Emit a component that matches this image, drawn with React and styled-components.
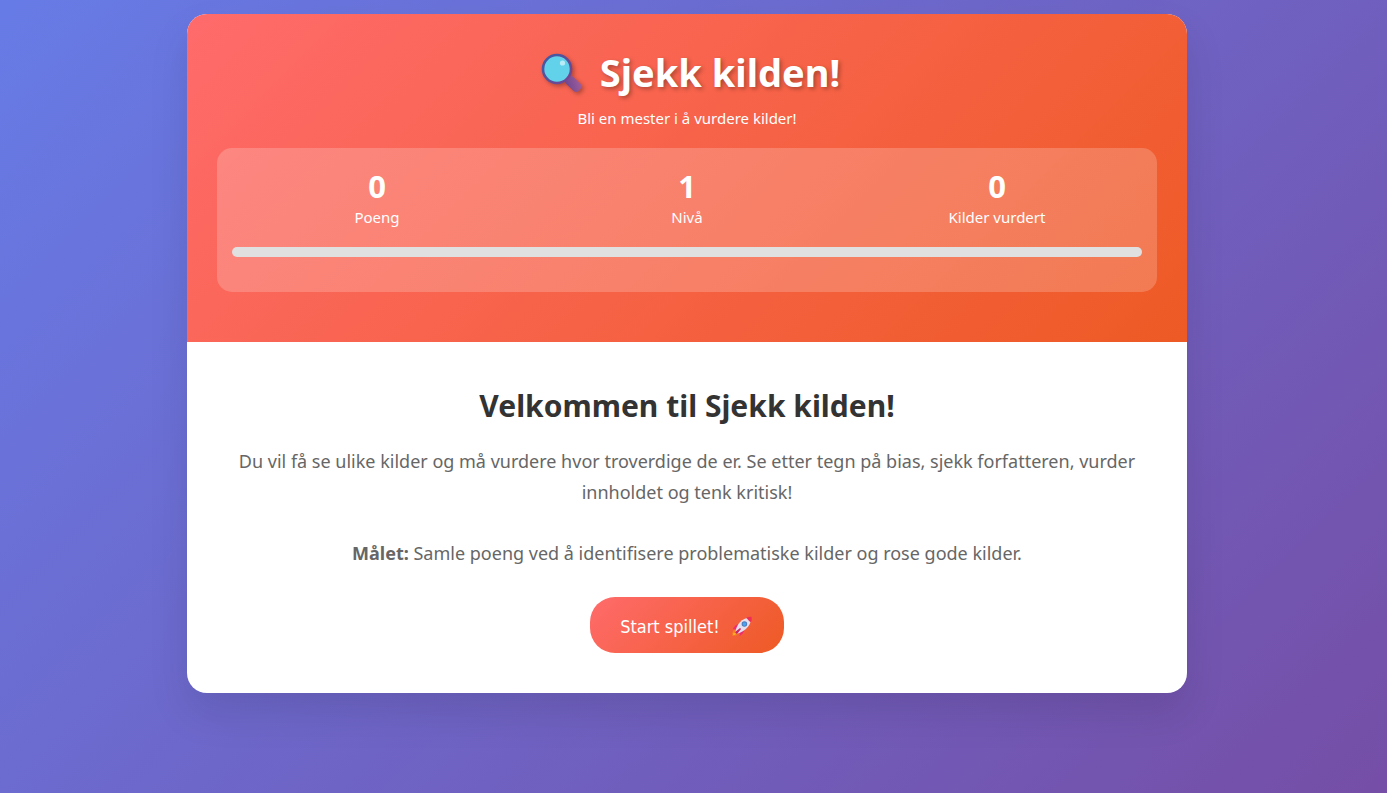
import React, { useState } from "react";
import styled, { createGlobalStyle } from "styled-components";

const GlobalStyle = createGlobalStyle`
  * {
    margin: 0;
    padding: 0;
    box-sizing: border-box;
  }
  body {
    font-family: "Segoe UI", "Noto Sans", "Open Sans", sans-serif;
    font-size: 15px;
    color: #333;
  }
`;

const Page = styled.div`
  min-height: 100vh;
  padding: 14px 13px 100px 0;
  background: linear-gradient(135deg, #667eea -6%, #764ba2 107%);
`;
const Container = styled.main`
  max-width: 1000px;
  margin: 0 auto;
  background: white;
  border-radius: 20px;
  box-shadow: 0 20px 40px rgba(0, 0, 0, 0.1);
  overflow: hidden;
`;
const Header = styled.header`
  padding: 30px 30px 50px;
  background: linear-gradient(135deg, #ff6b6b, #ee5a24);
  color: white;
  text-align: center;
`;
const Title = styled.h1`
  display: flex;
  align-items: center;
  justify-content: center;
  gap: 18px;
  margin-bottom: 8px;
  font-size: 38px;
  line-height: 56px;
  text-shadow: 2px 2px 4px rgba(0, 0, 0, 0.3);
  svg {
    filter: drop-shadow(2px 2px 2px rgba(0, 0, 0, 0.3));
  }
`;
const Subtitle = styled.p`
  line-height: 20px;
`;
const ScoreBoard = styled.section`
  margin-top: 20px;
  padding: 15px 15px 35px;
  background: rgba(255, 255, 255, 0.2);
  border-radius: 15px;
`;
const Stats = styled.dl`
  display: grid;
  grid-template-columns: repeat(3, 1fr);
  gap: 20px;
  padding: 4px 0 20px;
`;
const Stat = styled.div`
  display: flex;
  flex-direction: column-reverse;
`;
const StatLabel = styled.dt`
  padding-top: 2px;
  line-height: 20px;
`;
const StatValue = styled.dd`
  font-size: 31px;
  font-weight: bold;
  line-height: 38px;
`;
const ProgressBar = styled.div`
  height: 10px;
  background: #e0e0e0;
  border-radius: 5px;
  overflow: hidden;
`;
const ProgressFill = styled.div`
  height: 100%;
  background: linear-gradient(90deg, #4caf50, #8bc34a);
`;
const Content = styled.section`
  padding: 40px;
  text-align: center;
`;
const Heading = styled.h2`
  margin-bottom: 17px;
  font-size: 30px;
  line-height: 47px;
`;
const Intro = styled.p`
  margin-bottom: 28px;
  color: #666;
  font-size: 18px;
  line-height: 31px;
  & + & {
    margin-top: 30px;
  }
`;
const StartButton = styled.button`
  display: inline-flex;
  align-items: center;
  gap: 10px;
  height: 56px;
  padding: 2px 30px 0;
  border: none;
  border-radius: 25px;
  background: linear-gradient(135deg, #ff6b6b, #ee5a24);
  color: white;
  font-family: Tahoma, "DejaVu Sans Condensed", "Noto Sans", sans-serif;
  font-size: 18px;
  cursor: pointer;
`;

const MagnifierIcon = () => (
  <svg width="48" height="48" viewBox="-4 -2 48 48" aria-hidden="true">
    <defs>
      <linearGradient id="ring" x1="0" y1="0" x2="1" y2="1">
        <stop offset="0" stopColor="#3d5ca6" />
        <stop offset="1" stopColor="#7a4290" />
      </linearGradient>
      <linearGradient id="handle" x1="0" y1="1" x2="1" y2="0">
        <stop offset="0" stopColor="#6a4590" />
        <stop offset="1" stopColor="#a35e9b" />
      </linearGradient>
    </defs>
    <path d="M27 29l4 4" stroke="#674087" strokeWidth="4" />
    <rect
      x="27"
      y="29"
      width="17"
      height="10"
      rx="4"
      fill="url(#handle)"
      transform="rotate(43 35.5 34)"
    />
    <circle cx="19" cy="19" r="14" fill="#62d1ea" stroke="url(#ring)" strokeWidth="2.6" />
    <circle cx="24.5" cy="13" r="2.6" fill="#b9ecf7" />
  </svg>
);

const RocketIcon = () => (
  <svg width="24" height="24" viewBox="-1 -1 25 25" aria-hidden="true">
    <path d="M3 15.5Q1 18 1.5 22Q5.5 22 8 19.5Z" fill="#f58220" />
    <path d="M2.5 18.5Q2 20 2.5 21Q4 21 5.5 19.5Z" fill="#ffb52e" />
    <path d="M8 9.5Q4 10.5 2 15L7 14.5Z" fill="#ef2d6b" />
    <path d="M14 15.5Q13.5 19.5 9 22L9.5 17Z" fill="#ef2d6b" />
    <path d="M4.5 17.5Q6 10 11.5 5.5Q16 2 20.5 3Q21.5 7.5 18 12Q13.5 17.5 6.5 19.5Z" fill="#e4e0ee" />
    <path d="M16 3Q18.5 1.8 21.5 2Q22 5 20.8 7.5Q18.5 6.5 16 3Z" fill="#ef2d55" />
    <path d="M4.2 17.8L6.2 20L10.5 14.5L9.5 13.5Z" fill="#ce2464" />
    <circle cx="14" cy="9.5" r="2.9" fill="#5578ba" />
    <circle cx="14" cy="9.5" r="1.9" fill="#45a5ed" />
  </svg>
);

const LEVEL_SIZE = 5;

const App = () => {
  const [game, setGame] = useState({ points: 0, level: 1, reviewed: 0 });

  const stats = [
    { label: "Poeng", value: game.points },
    { label: "Nivå", value: game.level },
    { label: "Kilder vurdert", value: game.reviewed },
  ];
  const progress = ((game.reviewed % LEVEL_SIZE) / LEVEL_SIZE) * 100;

  return (
    <>
      <GlobalStyle />
      <Page>
        <Container>
          <Header>
            <Title>
              <MagnifierIcon />
              Sjekk kilden!
            </Title>
            <Subtitle>Bli en mester i å vurdere kilder!</Subtitle>
            <ScoreBoard>
              <Stats>
                {stats.map((stat) => (
                  <Stat key={stat.label}>
                    <StatLabel>{stat.label}</StatLabel>
                    <StatValue>{stat.value}</StatValue>
                  </Stat>
                ))}
              </Stats>
              <ProgressBar>
                <ProgressFill style={{ width: `${progress}%` }} />
              </ProgressBar>
            </ScoreBoard>
          </Header>
          <Content>
            <Heading>Velkommen til Sjekk kilden!</Heading>
            <Intro>
              Du vil få se ulike kilder og må vurdere hvor troverdige de er. Se
              etter tegn på bias, sjekk forfatteren, vurder innholdet og tenk
              kritisk!
            </Intro>
            <Intro>
              <strong>Målet:</strong> Samle poeng ved å identifisere
              problematiske kilder og rose gode kilder.
            </Intro>
            <StartButton
              type="button"
              onClick={() => setGame({ points: 0, level: 1, reviewed: 0 })}
            >
              Start spillet!
              <RocketIcon />
            </StartButton>
          </Content>
        </Container>
      </Page>
    </>
  );
};

export default App;
